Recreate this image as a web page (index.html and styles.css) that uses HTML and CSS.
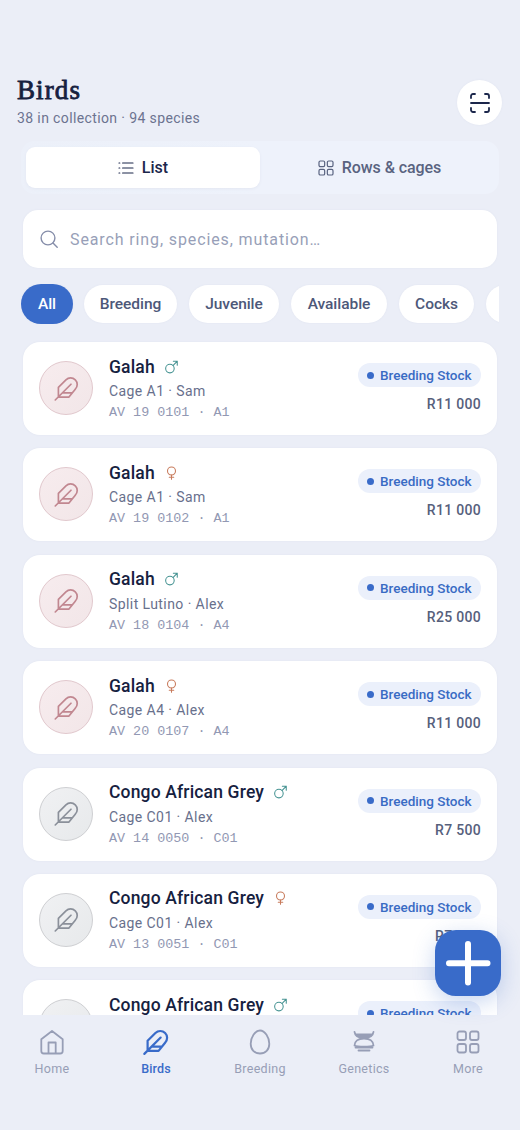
FILE: index.html
```html
<!DOCTYPE html>
<html lang="en">
<head>
<meta charset="utf-8">
<title>Birds</title>
<link rel="stylesheet" href="styles.css">
</head>
<body>
<svg class="defs" aria-hidden="true">
  <symbol id="feather" viewBox="0 0 24 24"><path d="M4.800 19.600V11L11.500 4.300c2.300-2.300 6-2.300 8.300 0s2.300 6 0 8.300L14.200 19.600zM16 8.200 2 22.200M17 15.900H8.500"/></symbol>
  <symbol id="male" viewBox="0 0 14 14"><circle cx="5.3" cy="8.7" r="4.6"/><path d="M8.600 5.400 13.200.8M9 .8h4.200V5"/></symbol>
  <symbol id="female" viewBox="0 0 14 14"><circle cx="7" cy="4.800" r="4.300"/><path d="M7 9.100v4.600M4.600 11.600h4.800"/></symbol>
  <symbol id="grid" viewBox="0 0 24 24"><rect x="1.500" y="1.500" width="8.500" height="8.500" rx="2"/><rect x="14" y="1.500" width="8.500" height="8.500" rx="2"/><rect x="1.500" y="14" width="8.500" height="8.500" rx="2"/><rect x="14" y="14" width="8.500" height="8.500" rx="2"/></symbol>
</svg>
<div class="app">
  <main class="screen">
    <header class="header">
      <div>
        <h1 class="title">Birds</h1>
        <p class="subtitle">38 in collection · 94 species</p>
      </div>
      <button class="scan" aria-label="Scan">
        <svg class="scan-icon" viewBox="0 0 22 22"><path d="M2 6V4a2 2 0 0 1 2-2h2M16 2h2a2 2 0 0 1 2 2v2M20 16v2a2 2 0 0 1-2 2h-2M6 20H4a2 2 0 0 1-2-2v-2M2 11h18"/></svg>
      </button>
    </header>
    <div class="toggle">
      <div class="tab tab-active">
        <svg class="tab-icon" viewBox="0 0 16 16"><path d="M4.600 3H15M4.600 8H15M4.600 13H15M1 3h.8M1 8h.8M1 13h.8"/></svg>
        <span>List</span>
      </div>
      <div class="tab">
        <svg class="tab-icon"><use href="#grid"/></svg>
        <span class="tab-wide">Rows &amp; cages</span>
      </div>
    </div>
    <div class="search">
      <svg class="search-icon" viewBox="0 0 18 18"><circle cx="8" cy="8" r="6.900"/><path d="m13 13 4.200 4.200"/></svg>
      <span>Search ring, species, mutation…</span>
    </div>
    <div class="chips">
      <span class="chip chip-active">All</span>
      <span class="chip chip-breeding">Breeding</span>
      <span class="chip chip-juvenile">Juvenile</span>
      <span class="chip chip-available">Available</span>
      <span class="chip chip-cocks">Cocks</span>
      <span class="chip chip-next"></span>
    </div>
    <div class="list">
      <article class="card">
        <div class="avatar pink"><svg class="feather"><use href="#feather"/></svg></div>
        <div class="info">
          <div class="name">Galah <svg class="sex male"><use href="#male"/></svg></div>
          <div class="place">Cage A1 · Sam</div><div class="ring">AV 19 0101 · A1</div>
        </div>
        <div class="side"><span class="badge">Breeding Stock</span><span class="price">R11 000</span></div>
      </article>
      <article class="card">
        <div class="avatar pink"><svg class="feather"><use href="#feather"/></svg></div>
        <div class="info">
          <div class="name">Galah <svg class="sex female"><use href="#female"/></svg></div>
          <div class="place">Cage A1 · Sam</div><div class="ring">AV 19 0102 · A1</div>
        </div>
        <div class="side"><span class="badge">Breeding Stock</span><span class="price">R11 000</span></div>
      </article>
      <article class="card">
        <div class="avatar pink"><svg class="feather"><use href="#feather"/></svg></div>
        <div class="info">
          <div class="name">Galah <svg class="sex male"><use href="#male"/></svg></div>
          <div class="place">Split Lutino · Alex</div><div class="ring">AV 18 0104 · A4</div>
        </div>
        <div class="side"><span class="badge">Breeding Stock</span><span class="price">R25 000</span></div>
      </article>
      <article class="card">
        <div class="avatar pink"><svg class="feather"><use href="#feather"/></svg></div>
        <div class="info">
          <div class="name">Galah <svg class="sex female"><use href="#female"/></svg></div>
          <div class="place">Cage A4 · Alex</div><div class="ring">AV 20 0107 · A4</div>
        </div>
        <div class="side"><span class="badge">Breeding Stock</span><span class="price">R11 000</span></div>
      </article>
      <article class="card">
        <div class="avatar grey"><svg class="feather"><use href="#feather"/></svg></div>
        <div class="info">
          <div class="name">Congo African Grey <svg class="sex male"><use href="#male"/></svg></div>
          <div class="place">Cage C01 · Alex</div><div class="ring">AV 14 0050 · C01</div>
        </div>
        <div class="side"><span class="badge">Breeding Stock</span><span class="price">R7 500</span></div>
      </article>
      <article class="card">
        <div class="avatar grey"><svg class="feather"><use href="#feather"/></svg></div>
        <div class="info">
          <div class="name">Congo African Grey <svg class="sex female"><use href="#female"/></svg></div>
          <div class="place">Cage C01 · Alex</div><div class="ring">AV 13 0051 · C01</div>
        </div>
        <div class="side"><span class="badge">Breeding Stock</span><span class="price">R7 500</span></div>
      </article>
      <article class="card">
        <div class="avatar grey"><svg class="feather"><use href="#feather"/></svg></div>
        <div class="info">
          <div class="name">Congo African Grey <svg class="sex male"><use href="#male"/></svg></div>
        </div>
        <div class="side"><span class="badge">Breeding Stock</span></div>
      </article>
    </div>
  </main>
  <nav class="nav">
    <div class="nav-item"><svg class="nav-icon" viewBox="0 0 28 28"><path d="M3.300 11.200 14 3l10.700 8.200V23a2.500 2.500 0 0 1-2.500 2.500H5.800A2.500 2.500 0 0 1 3.300 23zM10.500 25.500V14.500h7.200v11"/></svg><span>Home</span></div>
    <div class="nav-item nav-active"><svg class="nav-icon nav-feather"><use href="#feather"/></svg><span>Birds</span></div>
    <div class="nav-item"><svg class="nav-icon" viewBox="0 0 28 28"><path d="M14 2.500c-5 0-9.300 7-9.300 13.200 0 6 3.800 9.800 9.300 9.800s9.300-3.800 9.300-9.800C23.300 9.500 19 2.500 14 2.500z"/></svg><span>Breeding</span></div>
    <div class="nav-item"><svg class="nav-icon" viewBox="0 0 28 28"><path d="M4.500 3.800c.5 3.700 3.500 6.200 9.500 6.200s9-2.500 9.500-6.200M6 6.500h16M7.500 8.500h13M4.500 17.500c0-4 3.500-7 9.500-7s9.500 3 9.500 7M4.500 17.500c3 1.500 16 1.500 19 0M5.500 19.600h17M8.500 22.500h11"/></svg><span>Genetics</span></div>
    <div class="nav-item"><svg class="nav-icon nav-grid"><use href="#grid"/></svg><span>More</span></div>
  </nav>
  <button class="fab" aria-label="Add bird"><svg class="fab-icon" viewBox="0 0 66 66"><path d="M33 14v38.500M14 33.300h38.500"/></svg></button>
</div>
</body>
</html>
```
FILE: styles.css
```css
* { box-sizing: border-box; }
body { margin: 0; background: #ebeef7; font-family: Roboto, "Liberation Sans", sans-serif; color: #16213f; }
svg { fill: none; stroke: currentColor; stroke-linecap: round; stroke-linejoin: round; flex: none; }
button { border: 0; padding: 0; display: flex; align-items: center; justify-content: center; }
.defs { display: none; }
.app { position: relative; width: 520px; height: 1130px; display: flex; flex-direction: column; overflow: hidden; }
.screen { height: 1015px; flex: none; overflow: hidden; padding: 74px 18px 0 17px; }

.header { display: flex; justify-content: space-between; height: 67px; }
.title { margin: 0; font: 400 27px/32px "Liberation Serif", serif; letter-spacing: 1.1px; -webkit-text-stroke: .8px #16213f; }
.subtitle { margin: 3px 0 0; font-size: 14px; line-height: 18px; letter-spacing: .38px; color: #6b7390; }
.scan { width: 45px; height: 45px; margin-top: 6px; border-radius: 50%; background: #fff; color: #1b264b; box-shadow: 0 0 2px #dfe3ef; }
.scan-icon { width: 22px; height: 22px; stroke-width: 1.8; }

.toggle { display: grid; grid-template-columns: 234px 1fr; height: 53px; margin: 0 3px 0 4px; padding: 6px 0 6px 5px; border-radius: 14px; background: linear-gradient(90deg, #ecf0f9, #eef2fb 50%); }
.tab { display: flex; align-items: center; justify-content: center; gap: 8px; border-radius: 9px; font-size: 16px; font-weight: 500; color: #596380; }
.tab-active { background: #fff; color: #1b264b; box-shadow: 0 1px 3px #e3e7f2; }
.tab-icon { width: 16px; height: 16px; stroke-width: 1.2; }
.tab-wide { letter-spacing: -.08px; }
.tab:last-child .tab-icon { stroke-width: 1.8; }

.search { display: flex; align-items: center; gap: 12px; height: 58px; margin: 16px 5px 0 6px; padding: 0 17px; border-radius: 15px; background: #fff; box-shadow: 0 0 2px #dfe3ef; color: #989fb8; font-size: 16px; letter-spacing: .88px; }
.search-icon { width: 18px; height: 18px; stroke-width: 1.4; color: #858da9; }

.chips { display: flex; align-items: center; height: 40px; margin: 16px 3px 0 4px; gap: 12px; overflow: hidden; }
.chip { display: flex; align-items: center; justify-content: center; flex: none; height: 38px; border-radius: 19px; background: #fff; color: #4d5879; font-size: 15.5px; font-weight: 500; letter-spacing: -.05px; box-shadow: 0 0 2px #dfe3ef; }
.chip-active { width: 52px; height: 40px; margin-right: -1px; border-radius: 20px; background: #396bc9; color: #fff; }
.chip-breeding { width: 93px; }
.chip-juvenile { width: 90px; }
.chip-available { width: 96px; }
.chip-cocks { width: 75px; }
.chip-next { width: 75px; }

.list { display: flex; flex-direction: column; gap: 13.4px; margin: 18px 5px 0 6px; }
.card { display: flex; height: 93px; flex: none; padding: 0 16px; border-radius: 17px; background: #fff; box-shadow: 0 0 2px #dfe3ef; }
.avatar { display: flex; align-items: center; justify-content: center; width: 54px; height: 54px; margin-top: 19px; border: 1.5px solid; border-radius: 50%; }
.pink { background: linear-gradient(135deg, #f7ecee, #f2e6e8); border-color: #e1c8cd; color: #c18790; }
.grey { background: linear-gradient(135deg, #f0f1f3, #e7e9eb); border-color: #cecfd2; color: #8b909a; }
.feather { width: 27px; height: 27px; stroke-width: 1.5; }
.info { flex: 1; margin-left: 16px; padding-top: 13px; }
.name { display: flex; align-items: center; height: 23px; gap: 10px; font-size: 17.5px; font-weight: 500; letter-spacing: .16px; }
.sex { width: 13px; height: 14px; stroke-width: 1.15; }
.male { color: #479493; }
.female { color: #c87b5c; }
.place { margin-top: 4px; font-size: 14px; line-height: 19px; letter-spacing: .42px; color: #68708c; }
.ring { margin-top: 2px; font: 13.4px/20px "Liberation Mono", monospace; color: #9298b3; }
.side { display: flex; flex-direction: column; align-items: flex-end; padding-top: 21px; }
.badge { display: flex; align-items: center; gap: 6px; height: 24px; width: 123px; padding-left: 9px; border-radius: 12px; background: #ebf0fb; color: #396bc4; font-size: 13.5px; font-weight: 500; letter-spacing: 0; white-space: nowrap; }
.badge::before { content: ""; width: 7px; height: 7px; border-radius: 50%; background: #396bc9; }
.price { margin-top: 8px; font-size: 14px; line-height: 19px; font-weight: 500; letter-spacing: .3px; color: #56607c; }

.nav { position: relative; display: grid; grid-template-columns: repeat(5, 104px); height: 115px; padding-top: 13px; background: #ebeef7; }
.nav-item { display: flex; flex-direction: column; align-items: center; gap: 4px; height: 48px; color: #979eb6; font-size: 12.5px; line-height: 17px; letter-spacing: .3px; }
.nav-icon { width: 28px; height: 28px; stroke-width: 1.8; }
.nav-feather { stroke-width: 1.9; }
.nav-grid { width: 24px; height: 24px; margin: 2px; }
.nav-active { color: #396bc9; font-weight: 500; letter-spacing: .1px; }
.fab { position: absolute; left: 435px; top: 930px; width: 66px; height: 66px; border-radius: 21px; background: #396bc9; color: #fff; box-shadow: 0 6px 22px rgba(57, 107, 201, .28); }
.fab-icon { width: 66px; height: 66px; stroke-width: 6; }
```
